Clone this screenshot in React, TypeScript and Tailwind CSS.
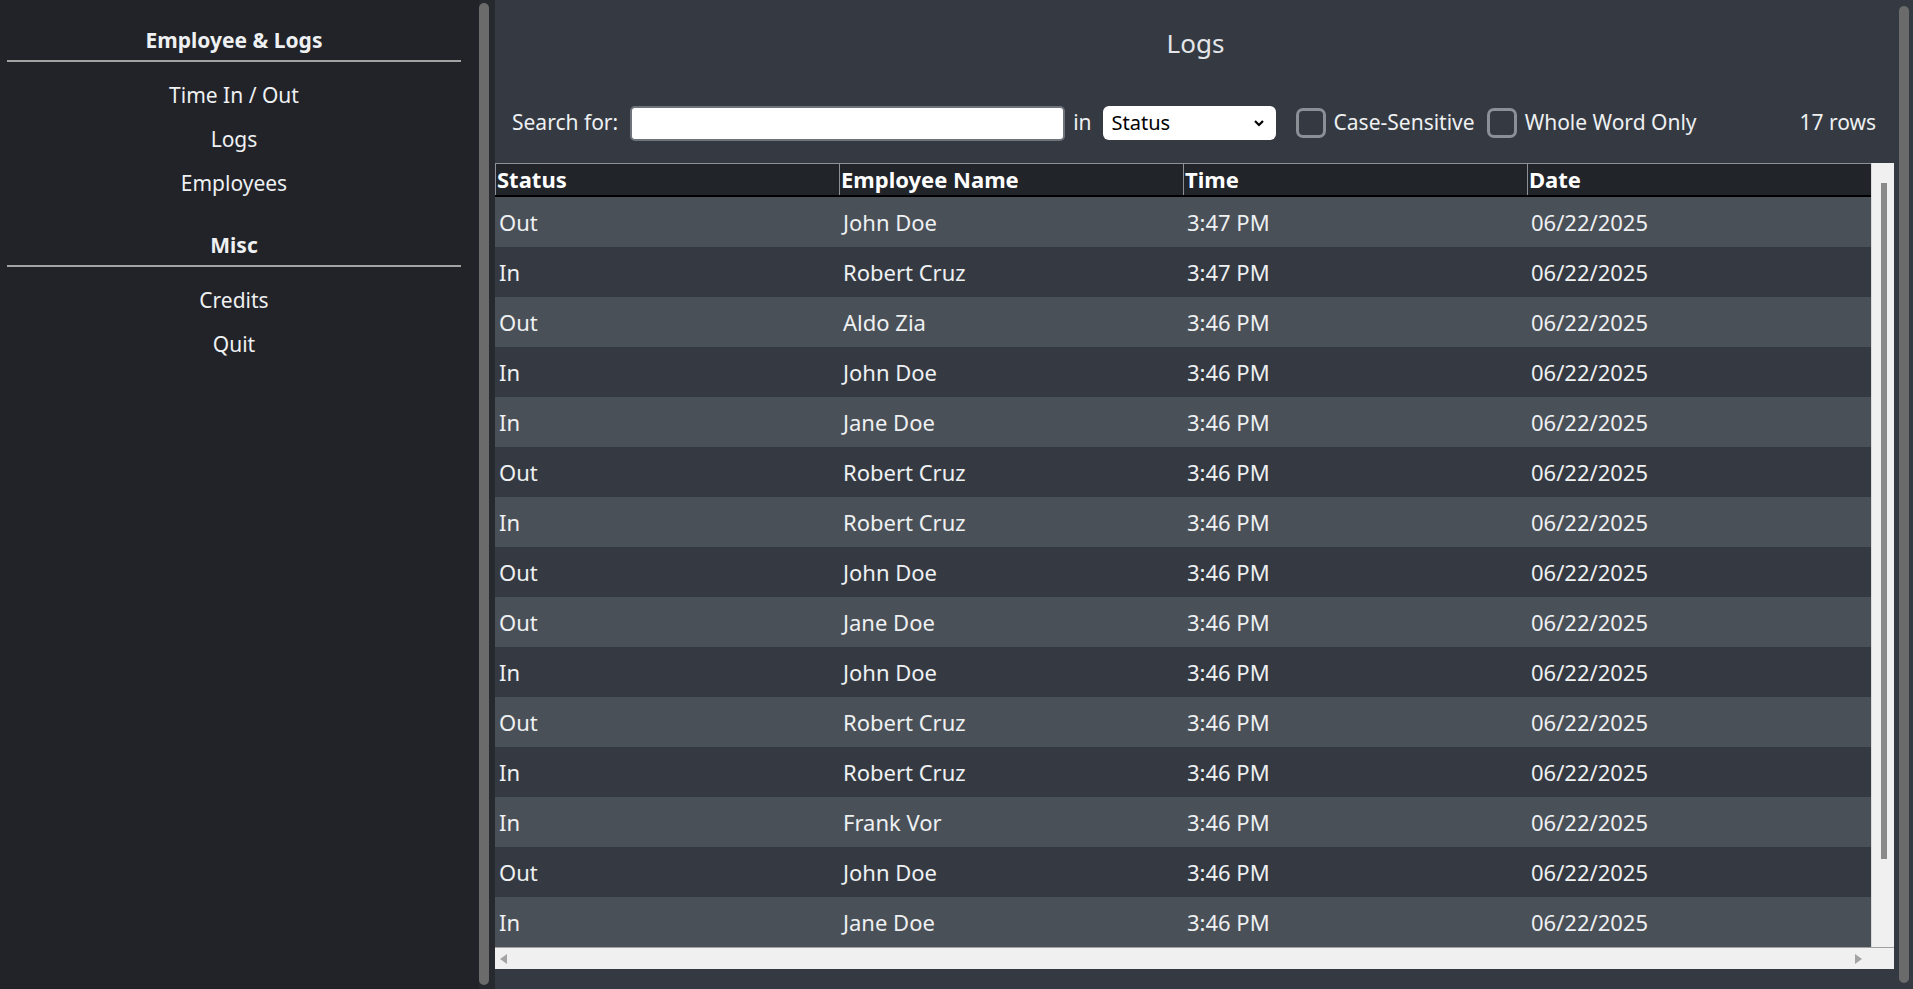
import React from 'react';

const logs: [string, string, string][] = [
  ['Out', 'John Doe', '3:47 PM'],
  ['In', 'Robert Cruz', '3:47 PM'],
  ['Out', 'Aldo Zia', '3:46 PM'],
  ['In', 'John Doe', '3:46 PM'],
  ['In', 'Jane Doe', '3:46 PM'],
  ['Out', 'Robert Cruz', '3:46 PM'],
  ['In', 'Robert Cruz', '3:46 PM'],
  ['Out', 'John Doe', '3:46 PM'],
  ['Out', 'Jane Doe', '3:46 PM'],
  ['In', 'John Doe', '3:46 PM'],
  ['Out', 'Robert Cruz', '3:46 PM'],
  ['In', 'Robert Cruz', '3:46 PM'],
  ['In', 'Frank Vor', '3:46 PM'],
  ['Out', 'John Doe', '3:46 PM'],
  ['In', 'Jane Doe', '3:46 PM'],
];

function Section({ title, items }: { title: string; items: string[] }) {
  return (
    <div className="flex flex-col items-center">
      <div className="w-full text-center font-bold text-[21px] leading-[28px] pt-[26px] pb-[6px] border-b-2 border-[#a3a3a3]">
        {title}
      </div>
      <div className="flex flex-col items-center pt-[16px]">
        {items.map((it) => (
          <div key={it} className="h-[44px] leading-[34px] text-[21px]">
            {it}
          </div>
        ))}
      </div>
    </div>
  );
}

function Checkbox({ label }: { label: string }) {
  return (
    <label className="flex items-center gap-[8px]">
      <span className="w-[30px] h-[30px] rounded-[7px] border-[3px] border-[#8b8f96] bg-transparent" />
      <span>{label}</span>
    </label>
  );
}

export default function App() {
  const headers = ['Status', 'Employee Name', 'Time', 'Date'];
  return (
    <div
      className="flex h-[989px] w-full overflow-hidden text-[#eef0f2]"
      style={{ fontFamily: '"Noto Sans", "Open Sans", sans-serif' }}
    >
      {/* sidebar */}
      <aside className="w-[479px] shrink-0 bg-[#212328] pl-[7px] pr-[18px] flex flex-col">
        <Section title="Employee & Logs" items={['Time In / Out', 'Logs', 'Employees']} />
        <div className="mt-[-5px]">
          <Section title="Misc" items={['Credits', 'Quit']} />
        </div>
      </aside>
      <div className="w-[16px] shrink-0 bg-[#26292e] pt-[3px] pb-[4px]">
        <div className="w-[10px] h-full rounded-full bg-[#6b6b6b]" />
      </div>

      {/* main */}
      <main className="flex-1 bg-[#353a42] flex flex-col">
        <h1 className="text-center text-[26px] leading-[34px] pt-[26px] text-[#e4e6e9]">Logs</h1>
        <div className="flex items-center h-[36px] mt-[45px] pl-[17px] pr-[20px] text-[21px]">
          <span>Search for:</span>
          <input
            type="text"
            className="ml-[12px] w-[435px] h-[35px] rounded-[5px] bg-white border-2 border-[#6f747b] outline-none"
          />
          <span className="ml-[8px]">in</span>
          <div className="ml-[11px] w-[173px] h-[34px] rounded-[6px] bg-white text-black flex items-center justify-between pl-[9px] pr-[11px] text-[20px]">
            <span>Status</span>
            <svg width="12" height="8" viewBox="0 0 12 8">
              <path d="M2 2 L6 6 L10 2" fill="none" stroke="#000" strokeWidth="2.2" />
            </svg>
          </div>
          <div className="ml-[20px]">
            <Checkbox label="Case-Sensitive" />
          </div>
          <div className="ml-[12px]">
            <Checkbox label="Whole Word Only" />
          </div>
          <span className="ml-auto">17 rows</span>
        </div>

        {/* table */}
        <div className="mt-[22px] w-[1399px] h-[806px] flex flex-col bg-[#f0f0f0]">
          <div className="flex h-[784px]">
            <div className="w-[1376px] flex flex-col">
              <div className="flex h-[34px] bg-[#212429] border-t border-[#8d9096] border-b-2 border-b-black">
                {headers.map((h) => (
                  <div
                    key={h}
                    className="w-[344px] border-l border-[#8d9096] pl-[1px] font-bold text-[22px] leading-[31px] text-white"
                  >
                    {h}
                  </div>
                ))}
              </div>
              {logs.map((r, i) => (
                <div
                  key={i}
                  className={`flex h-[50px] items-center text-[22px] ${i % 2 === 0 ? 'bg-[#4a5058]' : 'bg-[#353a42]'}`}
                >
                  <div className="w-[344px] pl-[4px]">{r[0]}</div>
                  <div className="w-[344px] pl-[4px]">{r[1]}</div>
                  <div className="w-[344px] pl-[4px]">{r[2]}</div>
                  <div className="w-[344px] pl-[4px]">06/22/2025</div>
                </div>
              ))}
            </div>
            <div className="w-[23px] pt-[20px] pl-[9px] border-l border-[#d9d9d9]">
              <div className="w-[6px] h-[676px] bg-[#8a8a8a]" />
            </div>
          </div>
          <div className="h-[22px] flex items-center justify-between pl-[5px] pr-[32px] border-t border-[#a0a0a0]">
            <svg width="7" height="10" viewBox="0 0 7 10">
              <path d="M7 0 L0 5 L7 10 Z" fill="#a3a3a3" />
            </svg>
            <svg width="7" height="10" viewBox="0 0 7 10">
              <path d="M0 0 L7 5 L0 10 Z" fill="#a3a3a3" />
            </svg>
          </div>
        </div>
      </main>
      <div className="w-[17px] shrink-0 bg-[#353a42] pl-[3px] pt-[6px] pb-[6px]">
        <div className="w-[10px] h-full rounded-full bg-[#6b6b6b]" />
      </div>
    </div>
  );
}
